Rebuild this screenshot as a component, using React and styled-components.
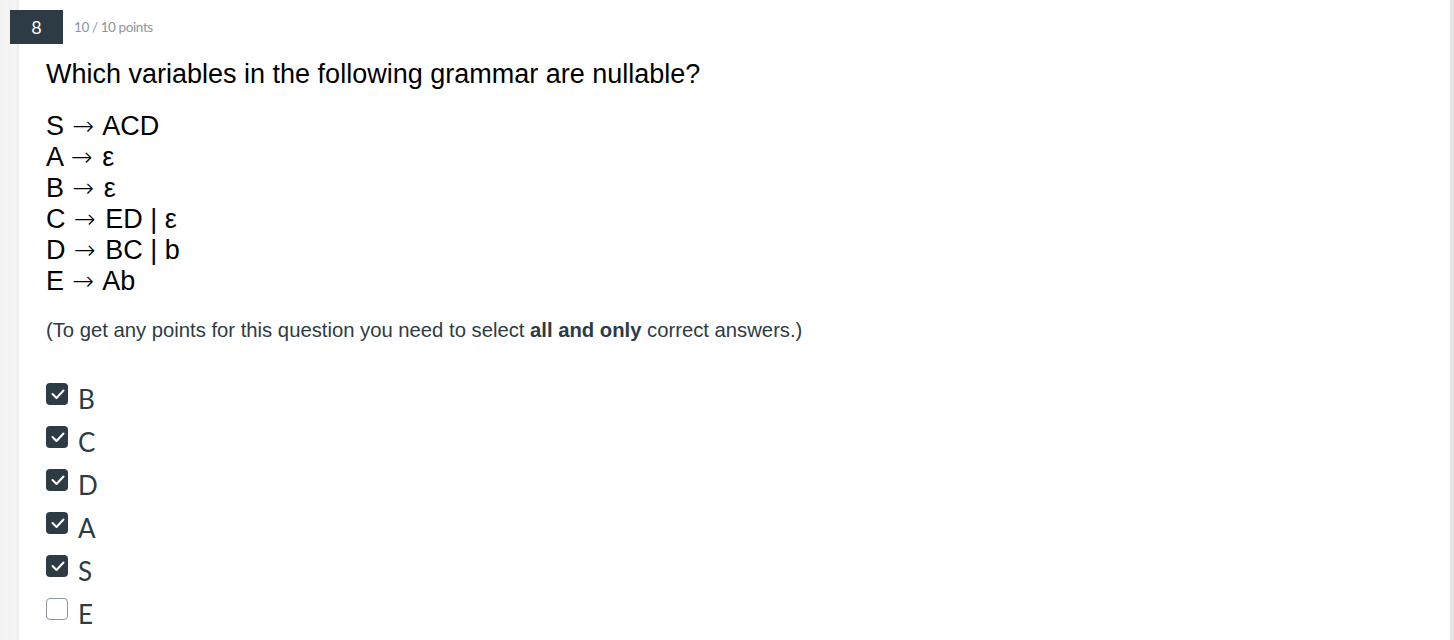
import React from 'react';
import styled, { createGlobalStyle } from 'styled-components';

const GlobalStyle = createGlobalStyle`
  html, body {
    margin: 0;
    padding: 0;
    background: #ffffff;
  }
  body {
    font-family: Lato, "Liberation Sans", sans-serif;
    color: #2d3b45;
  }
`;

// Page frame: grey gutter on the left, white question card, thin rail on the right
const Page = styled.div`
  display: flex;
  height: 640px;
  overflow: hidden;
`;

const Gutter = styled.div`
  width: 19px;
  flex: none;
  background: linear-gradient(to right, #f2f2f2, #f5f5f5 80%, #ececec);
`;

const Rail = styled.div`
  width: 4px;
  flex: none;
  background: #e3e3e3;
`;

const Card = styled.div`
  flex: 1;
  background: #ffffff;
  padding: 10px 0 0 27px;
  box-sizing: border-box;
`;

const Header = styled.div`
  display: flex;
  align-items: center;
  gap: 11px;
  margin-left: -36px;
`;

const NumberBadge = styled.div`
  width: 53px;
  height: 34px;
  background: #2d3b45;
  color: #ffffff;
  display: flex;
  align-items: center;
  justify-content: center;
  font-family: Lato, sans-serif;
  font-size: 18px;
`;

const Points = styled.span`
  font-family: Lato, sans-serif;
  font-size: 13.5px;
  color: #8b969e;
  letter-spacing: -0.4px;
`;

const QuestionText = styled.div`
  margin-top: 14px;
  font-family: "Liberation Sans", Arial, sans-serif;
  font-size: 27px;
  line-height: 32px;
  color: #000000;
`;

const Grammar = styled.div`
  margin-top: 21px;
  font-family: "Liberation Sans", Arial, sans-serif;
  font-size: 27px;
  line-height: 31px;
  color: #000000;
`;

const Rule = styled.div`
  white-space: pre;
`;

const Arrow = styled.span`
  font-family: "DejaVu Sans", sans-serif;
  font-size: 26px;
  font-weight: 200;
  line-height: 0;
  margin: 0 2px 0 1px;
`;

const Note = styled.p`
  margin: 21px 0 0;
  font-family: "Liberation Sans", Arial, sans-serif;
  font-size: 20.25px;
  line-height: 25px;
  color: #2d3b45;

  strong {
    font-weight: bold;
  }
`;

const Options = styled.div`
  margin-top: 34px;
  display: flex;
  flex-direction: column;
`;

const OptionRow = styled.label`
  display: flex;
  align-items: flex-start;
  gap: 10px;
  height: 43px;
`;

const Box = styled.span`
  width: 22px;
  height: 22px;
  margin-top: 6px;
  box-sizing: border-box;
  border-radius: 4px;
  flex: none;
  display: flex;
  align-items: center;
  justify-content: center;
  background: ${p => (p.checked ? '#2d3b45' : '#ffffff')};
  border: ${p => (p.checked ? 'none' : '1.5px solid #8b969e')};
`;

const OptionLabel = styled.span`
  padding-top: 2px;
  font-family: Lato, sans-serif;
  font-size: 26px;
  line-height: 41px;
  color: #2d3b45;
`;

const Check = () => (
  <svg width="22" height="22" viewBox="0 0 22 22">
    <path d="M6.5 11 L10.5 15 L17.5 7.5" fill="none" stroke="#ffffff" strokeWidth="2" strokeLinecap="round" strokeLinejoin="round" />
  </svg>
);

const rules = [
  ['S', 'ACD'],
  ['A', '\u03b5'],
  ['B', '\u03b5'],
  ['C', 'ED | \u03b5'],
  ['D', 'BC | b'],
  ['E', 'Ab'],
];

const answers = [
  { label: 'B', checked: true },
  { label: 'C', checked: true },
  { label: 'D', checked: true },
  { label: 'A', checked: true },
  { label: 'S', checked: true },
  { label: 'E', checked: false },
];

const App = () => (
  <>
    <GlobalStyle />
    <Page>
      <Gutter />
      <Card>
        <Header>
          <NumberBadge>8</NumberBadge>
          <Points>10 / 10 points</Points>
        </Header>
        <QuestionText>Which variables in the following grammar are nullable?</QuestionText>
        <Grammar>
          {rules.map(([lhs, rhs]) => (
            <Rule key={lhs}>
              {lhs} <Arrow>{'\u2192'}</Arrow> {rhs}
            </Rule>
          ))}
        </Grammar>
        <Note>
          (To get any points for this question you need to select <strong>all and only</strong> correct answers.)
        </Note>
        <Options>
          {answers.map(a => (
            <OptionRow key={a.label}>
              <Box checked={a.checked}>{a.checked && <Check />}</Box>
              <OptionLabel>{a.label}</OptionLabel>
            </OptionRow>
          ))}
        </Options>
      </Card>
      <Rail />
    </Page>
  </>
);

export default App;
